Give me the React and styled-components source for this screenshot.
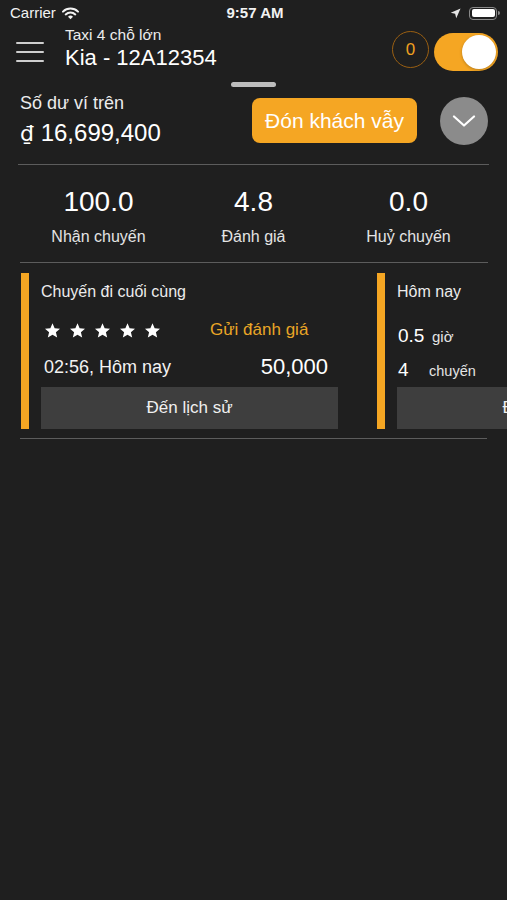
import React from "react";
import styled, { createGlobalStyle } from "styled-components";

const Global = createGlobalStyle`
  html, body { margin: 0; padding: 0; background: #1f1f1f; }
  body { font-family: "Liberation Sans", Arial, sans-serif; color: #fff; -webkit-font-smoothing: antialiased; }
  * { box-sizing: border-box; }
`;

const Page = styled.div`
  width: 507px;
  min-height: 900px;
  background: #1f1f1f;
  overflow: hidden;
`;

const StatusBar = styled.div`
  height: 26px;
  padding: 0 7px 0 10px;
  display: grid;
  grid-template-columns: 1fr auto 1fr;
  align-items: center;
  font-size: 15px;
  color: #f2f2f2;
`;

const StatusLeft = styled.div`
  display: flex;
  align-items: center;
  gap: 6px;
  line-height: 26px;
`;

const StatusTime = styled.div`
  font-weight: 700;
  line-height: 26px;
`;

const StatusRight = styled.div`
  display: flex;
  align-items: center;
  justify-content: flex-end;
  gap: 8px;
`;

const Battery = styled.div`
  position: relative;
  width: 28px;
  height: 13px;
  border: 1.5px solid #8a8a8a;
  border-radius: 4px;
  padding: 1.5px;
  margin-right: 3px;
  &::after {
    content: "";
    position: absolute;
    right: -4px;
    top: 3.5px;
    width: 2px;
    height: 4px;
    border-radius: 0 2px 2px 0;
    background: #8a8a8a;
  }
`;

const BatteryFill = styled.div`
  width: 100%;
  height: 100%;
  background: #fff;
  border-radius: 2px;
`;

const Header = styled.div`
  height: 52px;
  padding: 0 9px 0 16px;
  display: flex;
  align-items: center;
`;

const Hamburger = styled.div`
  width: 28px;
  height: 20px;
  display: flex;
  flex-direction: column;
  justify-content: space-between;
`;

const HamLine = styled.span`
  display: block;
  height: 2px;
  background: #cfcfcf;
  border-radius: 1px;
`;

const TitleBlock = styled.div`
  align-self: flex-start;
  margin-left: 21px;
  flex: 1;
`;

const SubTitle = styled.div`
  font-size: 15.5px;
  line-height: 18px;
  color: #ececec;
`;

const MainTitle = styled.div`
  font-size: 22px;
  line-height: 28px;
  color: #fff;
`;

const Badge = styled.div`
  width: 37px;
  height: 37px;
  border-radius: 50%;
  border: 1.5px solid #9a5f12;
  color: #f0a020;
  font-size: 17px;
  display: flex;
  align-items: center;
  justify-content: center;
  margin-bottom: 5px;
`;

const Toggle = styled.div`
  width: 64px;
  height: 38px;
  border-radius: 19px;
  background: #f5a623;
  margin-left: 5px;
  padding: 2px;
  display: flex;
  justify-content: ${(p) => (p.$on ? "flex-end" : "flex-start")};
`;

const Knob = styled.div`
  width: 34px;
  height: 34px;
  border-radius: 50%;
  background: #fff;
  box-shadow: 0 1px 3px rgba(0, 0, 0, 0.25);
`;

const Handle = styled.div`
  width: 45px;
  height: 5px;
  border-radius: 3px;
  background: #bdbdbd;
  margin: 4px auto 0;
`;

const BalanceRow = styled.div`
  margin-top: 5px;
  height: 57px;
  padding: 0 19px 0 20px;
  display: flex;
  align-items: center;
`;

const BalanceInfo = styled.div`
  flex: 1;
`;

const BalanceLabel = styled.div`
  font-size: 18px;
  line-height: 22px;
  color: #ececec;
`;

const BalanceValue = styled.div`
  margin-top: 3px;
  font-size: 24px;
  line-height: 32px;
  color: #fff;
`;

const Currency = styled.span`
  font-family: "DejaVu Sans", "Noto Sans", sans-serif;
  font-size: 22px;
`;

const PrimaryButton = styled.div`
  width: 165px;
  height: 45px;
  border-radius: 8px;
  background: #f5a623;
  color: #fff;
  font-size: 21px;
  display: flex;
  align-items: center;
  justify-content: center;
`;

const RoundButton = styled.div`
  width: 48px;
  height: 48px;
  border-radius: 50%;
  background: #8b8b8b;
  margin-left: 23px;
  display: flex;
  align-items: center;
  justify-content: center;
`;

const Divider = styled.div`
  height: 1px;
  background: #5c5c5c;
  margin: ${(p) => p.$m || "0"};
`;

const Stats = styled.div`
  display: grid;
  grid-template-columns: repeat(3, 1fr);
  padding: 21px 21px 15px 21px;
`;

const Stat = styled.div`
  text-align: center;
`;

const StatValue = styled.div`
  font-size: 28px;
  line-height: 32px;
  color: #fff;
`;

const StatLabel = styled.div`
  margin-top: 9px;
  font-size: 16px;
  line-height: 20px;
  color: #e4e4e4;
`;

const CardRow = styled.div`
  display: flex;
  gap: 20px;
  padding-left: 21px;
  margin-top: 10px;
  overflow: hidden;
`;

const Card = styled.div`
  flex-shrink: 0;
  width: 336px;
  height: 156px;
  display: flex;
`;

const CardBar = styled.div`
  width: 8px;
  background: #f5a623;
  flex-shrink: 0;
`;

const CardBody = styled.div`
  flex: 1;
  padding: 8px 19px 0 12px;
  display: flex;
  flex-direction: column;
`;

const CardTitle = styled.div`
  font-size: 16px;
  line-height: 22px;
  color: #ececec;
`;

const StarsRow = styled.div`
  margin-top: 16px;
  height: 22px;
  display: flex;
  align-items: center;
  padding-left: 3px;
`;

const Stars = styled.div`
  display: flex;
  gap: 8px;
`;

const RateLink = styled.div`
  margin-left: 49px;
  font-size: 17px;
  color: #e9a626;
`;

const TripRow = styled.div`
  margin-top: 14px;
  height: 24px;
  display: flex;
  align-items: center;
  justify-content: space-between;
  padding: 0 10px 0 3px;
`;

const TripTime = styled.div`
  font-size: 18px;
  color: #f2f2f2;
`;

const TripPrice = styled.div`
  font-size: 22px;
  color: #fff;
`;

const GrayButton = styled.div`
  margin-top: auto;
  height: 42px;
  flex-shrink: 0;
  width: 297px;
  background: #3e3e3e;
  color: #f0f0f0;
  font-size: 17px;
  display: flex;
  align-items: center;
  justify-content: center;
  white-space: nowrap;
`;

const MetricRow = styled.div`
  margin-top: ${(p) => p.$mt}px;
  line-height: ${(p) => p.$lh}px;
  display: flex;
  align-items: baseline;
  padding-left: 1px;
`;

const MetricValue = styled.span`
  font-size: 19px;
  color: #fff;
  min-width: ${(p) => p.$w}px;
`;

const MetricUnit = styled.span`
  font-size: ${(p) => p.$fs}px;
  color: #e4e4e4;
`;

const Star = () => (
  <svg width="17" height="17" viewBox="0 0 24 24">
    <path
      fill="#fff"
      d="M12 1.8l3 7.1 7.6.6-5.8 5 1.8 7.5L12 18l-6.6 4 1.8-7.5-5.8-5 7.6-.6z"
    />
  </svg>
);

const Wifi = () => (
  <svg width="17" height="13" viewBox="0 0 17 13">
    <path d="M1 4.6A10.8 10.8 0 0 1 16 4.6" stroke="#f2f2f2" strokeWidth="2" fill="none" strokeLinecap="round" />
    <path d="M3.7 7.4A7 7 0 0 1 13.3 7.4" stroke="#f2f2f2" strokeWidth="2" fill="none" strokeLinecap="round" />
    <path d="M8.5 12.2L6 9.7A3.6 3.6 0 0 1 11 9.7Z" fill="#f2f2f2" />
  </svg>
);

const LocationArrow = () => (
  <svg width="11" height="11" viewBox="0 0 12 12">
    <path d="M11.5 0.5L0.8 5.2 5.6 6.3 6.8 11.2Z" fill="#e6e6e6" />
  </svg>
);

const Chevron = () => (
  <svg width="24" height="12" viewBox="0 0 24 12">
    <path d="M2 1.5L12 10.5 22 1.5" stroke="#fff" strokeWidth="2.2" fill="none" strokeLinecap="round" strokeLinejoin="round" />
  </svg>
);

const stats = [
  { value: "100.0", label: "Nhận chuyến" },
  { value: "4.8", label: "Đánh giá" },
  { value: "0.0", label: "Huỷ chuyến" },
];

export default function App() {
  return (
    <Page>
      <Global />
      <StatusBar>
        <StatusLeft>
          <span>Carrier</span>
          <Wifi />
        </StatusLeft>
        <StatusTime>9:57 AM</StatusTime>
        <StatusRight>
          <LocationArrow />
          <Battery>
            <BatteryFill />
          </Battery>
        </StatusRight>
      </StatusBar>

      <Header>
        <Hamburger>
          <HamLine />
          <HamLine />
          <HamLine />
        </Hamburger>
        <TitleBlock>
          <SubTitle>Taxi 4 chỗ lớn</SubTitle>
          <MainTitle>Kia - 12A12354</MainTitle>
        </TitleBlock>
        <Badge>0</Badge>
        <Toggle $on>
          <Knob />
        </Toggle>
      </Header>

      <Handle />

      <BalanceRow>
        <BalanceInfo>
          <BalanceLabel>Số dư ví trên</BalanceLabel>
          <BalanceValue>
            <Currency>₫</Currency> 16,699,400
          </BalanceValue>
        </BalanceInfo>
        <PrimaryButton>Đón khách vẫy</PrimaryButton>
        <RoundButton>
          <Chevron />
        </RoundButton>
      </BalanceRow>

      <Divider $m="15px 18px 0 18px" />

      <Stats>
        {stats.map((s) => (
          <Stat key={s.label}>
            <StatValue>{s.value}</StatValue>
            <StatLabel>{s.label}</StatLabel>
          </Stat>
        ))}
      </Stats>

      <Divider $m="0 19px 0 20px" />

      <CardRow>
        <Card>
          <CardBar />
          <CardBody>
            <CardTitle>Chuyến đi cuối cùng</CardTitle>
            <StarsRow>
              <Stars>
                <Star />
                <Star />
                <Star />
                <Star />
                <Star />
              </Stars>
              <RateLink>Gửi đánh giá</RateLink>
            </StarsRow>
            <TripRow>
              <TripTime>02:56, Hôm nay</TripTime>
              <TripPrice>50,000</TripPrice>
            </TripRow>
            <GrayButton>Đến lịch sử</GrayButton>
          </CardBody>
        </Card>
        <Card>
          <CardBar />
          <CardBody>
            <CardTitle>Hôm nay</CardTitle>
            <MetricRow $mt={20} $lh={26}>
              <MetricValue $w={34}>0.5</MetricValue>
              <MetricUnit $fs={15}>giờ</MetricUnit>
            </MetricRow>
            <MetricRow $mt={8} $lh={24}>
              <MetricValue $w={31}>4</MetricValue>
              <MetricUnit $fs={14.5}>chuyến</MetricUnit>
            </MetricRow>
            <GrayButton>Đến lịch sử</GrayButton>
          </CardBody>
        </Card>
      </CardRow>

      <Divider $m="9px 20px 0 20px" />
    </Page>
  );
}
